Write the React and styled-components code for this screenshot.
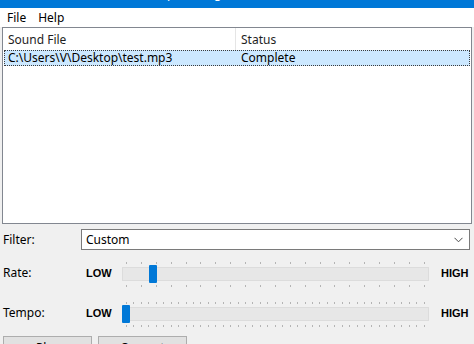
import React from 'react';
import styled, { createGlobalStyle } from 'styled-components';

const GlobalStyle = createGlobalStyle`
  html, body {
    margin: 0;
    padding: 0;
    background: #f0f0f0;
    overflow: hidden;
  }
  body {
    font-family: "Noto Sans", "Open Sans", sans-serif;
    font-size: 12px;
    color: #000000;
  }
`;

const StyledWindow = styled.div`
  width: 474px;
  height: 344px;
  overflow: hidden;
  display: flex;
  flex-direction: column;
  background: #f0f0f0;
`;

const StyledTitleBar = styled.div`
  height: 8px;
  flex: none;
  background: #0078d7;
  overflow: hidden;
  color: #ffffff;
  padding-left: 104px;
`;

const StyledTitleText = styled.div`
  margin-top: -14px;
  font-size: 12px;
  line-height: 16px;
`;

const StyledMenuBar = styled.div`
  height: 19px;
  flex: none;
  background: #ffffff;
  display: flex;
  align-items: center;
  padding-left: 1px;
`;

const StyledMenuItem = styled.span`
  padding: 0 6px;
  line-height: 19px;
`;

const StyledList = styled.div`
  height: 195px;
  flex: none;
  margin: 0 2px;
  border: 1px solid #828790;
  background: #ffffff;
  display: flex;
  flex-direction: column;
`;

const StyledHeader = styled.div`
  display: grid;
  grid-template-columns: 233px 1fr;
  height: 22px;
`;

const StyledHeaderCell = styled.div`
  display: flex;
  align-items: center;
  padding-left: 5px;
  color: #1e1e1e;
  border-right: ${props => props.divider ? '1px solid #e5e5e5' : 'none'};
`;

const StyledRow = styled.div`
  display: grid;
  grid-template-columns: 233px 1fr;
  align-items: center;
  height: 14px;
  margin: 0 1px;
  background: ${props => props.selected ? '#cce8ff' : 'transparent'};
  border: 1px dotted ${props => props.selected ? '#3c3c3c' : 'transparent'};
`;

const StyledCell = styled.div`
  padding-left: 3px;
  line-height: 14px;
  white-space: nowrap;
`;

const StyledControls = styled.div`
  display: flex;
  flex-direction: column;
  padding: 5px 4px 0 3px;
`;

const StyledFilterRow = styled.div`
  display: grid;
  grid-template-columns: 78px 1fr;
  align-items: center;
  height: 21px;
`;

const StyledLabel = styled.span`
  line-height: 16px;
`;

const StyledCombo = styled.div`
  height: 19px;
  border: 1px solid #7a7a7a;
  background: #ffffff;
  display: flex;
  align-items: center;
  justify-content: space-between;
  padding: 0 6px 0 4px;
`;

const StyledSliderRow = styled.div`
  display: grid;
  grid-template-columns: 83px 36px 307px 1fr;
  align-items: center;
  height: 30px;
  margin-top: ${props => props.gap}px;
`;

const StyledBound = styled.span`
  font-family: "Liberation Sans", Arial, sans-serif;
  font-weight: 700;
  font-size: 11px;
  padding-left: ${props => props.indent || 0}px;
`;

const StyledTrackbar = styled.div`
  position: relative;
  height: 30px;
`;

const StyledTicks = styled.div`
  position: absolute;
  left: 4px;
  right: 4px;
  top: ${props => props.top}px;
  height: 2px;
  display: flex;
  justify-content: space-between;
`;

const StyledTick = styled.span`
  width: 1px;
  height: 2px;
  background: #b4b4b4;
`;

const StyledTrack = styled.div`
  position: absolute;
  left: 0;
  right: 0;
  top: 9px;
  height: 12px;
  background: #e7e7e7;
  border: 1px solid #dcdcdc;
`;

const StyledThumb = styled.div`
  position: absolute;
  top: 7px;
  width: 8px;
  height: 18px;
  background: #0078d7;
  border-radius: 1px;
`;

const StyledButtons = styled.div`
  display: flex;
  gap: 6px;
  margin-top: 8px;
`;

const StyledButton = styled.div`
  width: 87px;
  height: 21px;
  border: 1px solid #adadad;
  background: #e1e1e1;
  display: flex;
  align-items: center;
  justify-content: center;
`;

const Chevron = () => (
  <svg width="9" height="6" viewBox="0 0 9 6">
    <path d="M0.5 0.8 L4.5 4.8 L8.5 0.8" fill="none" stroke="#4a4a4a" strokeWidth="1" />
  </svg>
);

const Trackbar = ({ ticks, position }) => {
  const marks = Array.from({ length: ticks }, (_, i) => <StyledTick key={i} />);
  const left = 4 + position * 298 - 4;
  return (
    <StyledTrackbar>
      <StyledTicks top={4}>{marks}</StyledTicks>
      <StyledTrack />
      <StyledTicks top={27}>{marks}</StyledTicks>
      <StyledThumb style={{ left: `${left}px` }} />
    </StyledTrackbar>
  );
};

const sliders = [
  { label: 'Rate:', ticks: 21, position: 0.09, gap: 8 },
  { label: 'Tempo:', ticks: 41, position: 0, gap: 10 },
];

const App = () => (
  <StyledWindow>
    <GlobalStyle />
    <StyledTitleBar>
      <StyledTitleText>Sound Tempo Changer</StyledTitleText>
    </StyledTitleBar>
    <StyledMenuBar>
      <StyledMenuItem>File</StyledMenuItem>
      <StyledMenuItem>Help</StyledMenuItem>
    </StyledMenuBar>
    <StyledList>
      <StyledHeader>
        <StyledHeaderCell divider>Sound File</StyledHeaderCell>
        <StyledHeaderCell>Status</StyledHeaderCell>
      </StyledHeader>
      <StyledRow selected>
        <StyledCell>C:\Users\V\Desktop\test.mp3</StyledCell>
        <StyledCell>Complete</StyledCell>
      </StyledRow>
    </StyledList>
    <StyledControls>
      <StyledFilterRow>
        <StyledLabel>Filter:</StyledLabel>
        <StyledCombo>
          <span>Custom</span>
          <Chevron />
        </StyledCombo>
      </StyledFilterRow>
      {sliders.map(s => (
        <StyledSliderRow key={s.label} gap={s.gap}>
          <StyledLabel>{s.label}</StyledLabel>
          <StyledBound>LOW</StyledBound>
          <Trackbar ticks={s.ticks} position={s.position} />
          <StyledBound indent={12}>HIGH</StyledBound>
        </StyledSliderRow>
      ))}
      <StyledButtons>
        <StyledButton>Play</StyledButton>
        <StyledButton>Convert</StyledButton>
      </StyledButtons>
    </StyledControls>
  </StyledWindow>
);

export default App;
